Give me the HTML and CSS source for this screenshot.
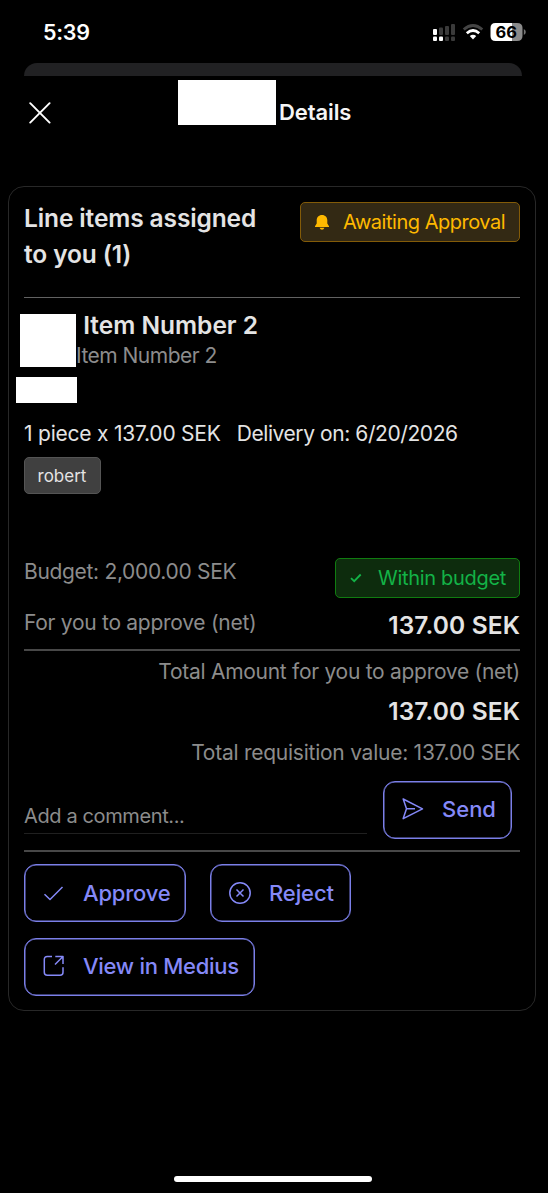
FILE: index.html
```html
<!DOCTYPE html>
<html lang="en">
<head>
<meta charset="utf-8">
<title>Details</title>
<link rel="stylesheet" href="styles.css">
</head>
<body>
<div class="screen">
  <div class="status">
    <span class="time">5:39</span>
    <svg class="status-icons" width="94" height="20" viewBox="0 0 94 20">
      <g fill="#fff"><rect x="1" y="6" width="4" height="6" rx="1"/><rect x="1" y="13.500" width="4" height="4.500" rx="1"/><rect x="7" y="13.500" width="4" height="4.500" rx="1"/></g>
      <g fill="#3a3a3a"><rect x="7" y="4.500" width="4" height="7.500" rx="1"/><rect x="13" y="3" width="4" height="9" rx="1"/><rect x="19" y="1" width="4" height="11" rx="1"/><rect x="13" y="13.500" width="4" height="4.500" rx="1"/><rect x="19" y="13.500" width="4" height="4.500" rx="1"/></g>
      <g fill="none" stroke-width="2.800"><path d="M31.700 6.500Q41-1.500 50.300 6.500" stroke="#444"/><path d="M34.800 10.300Q41 4.800 47.200 10.300" stroke="#fff"/></g>
      <path d="M37.800 13Q41 10.300 44.200 13L41 16.500Z" fill="#fff"/>
      <path d="M63.500 0h17v18H63.500q-5 0-5-5V5q0-5 5-5Z" fill="#fff"/><path d="M80.500 0h4.500q5.500 0 5.500 5v8q0 5-5.500 5h-4.500Z" fill="#8b8b8b"/><path d="M91.800 6q2 1 2 3t-2 3Z" fill="#777"/>
      <text class="battery-text" x="74.300" y="15" text-anchor="middle">66</text>
    </svg>
  </div>
  <div class="sheet-behind"></div>
  <header class="nav">
    <svg class="close" width="22" height="22" viewBox="0 0 22 22"><path d="M1.200 1.200 20.600 20.600M20.600 1.200 1.200 20.600"/></svg>
    <span class="mask mask-title"></span>
    <h1 class="nav-title">Details</h1>
  </header>
  <main class="card">
    <div class="card-head">
      <h2 class="heading">Line items assigned<br>to you (1)</h2>
      <div class="badge badge-wait">
        <svg width="14" height="15" viewBox="0 0 14 15"><path d="M7 0C3.700 0 1.700 2.300 1.700 5.300V8.500L0 11.300V12H14V11.300L12.300 8.500V5.300C12.300 2.300 10.300 0 7 0ZM4.600 12.700Q5.200 14.700 7 14.700T9.400 12.700Z" fill="#ffb900"/></svg>
        <span>Awaiting Approval</span>
      </div>
    </div>
    <section class="item">
      <div class="item-name">n Item Number 2</div>
      <div class="item-sub">Item Number 2</div>
      <span class="mask mask-name"></span>
      <span class="mask mask-code"></span>
    </section>
    <div class="facts"><span class="qty">1 piece x 137.00 SEK</span><span class="delivery">Delivery on: 6/20/2026</span></div>
    <div class="tag">robert</div>
    <div class="budget">
      <span class="budget-label">Budget: 2,000.00 SEK</span>
      <div class="badge badge-ok">
        <svg width="12" height="10" viewBox="0 0 12 10"><path d="M1 5.200 4.200 8.200 10.700 1.500" fill="none" stroke="#13b347" stroke-width="1.800"/></svg>
        <span>Within budget</span>
      </div>
    </div>
    <div class="net"><span class="net-label">For you to approve (net)</span><strong class="amount">137.00 SEK</strong></div>
    <div class="totals">
      <span class="total-label">Total Amount for you to approve (net)</span>
      <strong class="amount">137.00 SEK</strong>
      <span class="req">Total requisition value: 137.00 SEK</span>
    </div>
    <div class="comment">
      <div class="field"><span>Add a comment...</span></div>
      <button class="btn btn-send"><svg width="22" height="22" viewBox="0 0 22 22"><path d="M1.200 1 20.500 10.800 1.200 20.600 4.500 10.800ZM4.500 10.800H13"/></svg><span>Send</span></button>
    </div>
    <div class="actions">
      <button class="btn btn-approve"><svg width="22" height="22" viewBox="0 0 22 22"><path d="M1.500 12.300 7 17.500 19.500 5"/></svg><span>Approve</span></button>
      <button class="btn btn-reject"><svg width="22" height="22" viewBox="0 0 22 22"><circle cx="11" cy="11" r="10.200"/><path d="M7.500 7.500 14.500 14.500M14.500 7.500 7.500 14.500"/></svg><span>Reject</span></button>
      <button class="btn btn-view"><svg width="22" height="22" viewBox="0 0 22 22"><path d="M9 1.500H4.300Q1.300 1.500 1.300 4.500V17.300Q1.300 20.300 4.300 20.300H17Q20 20.300 20 17.300V12.300M12.300 1.500H20V9M20 1.500 12 9.500"/></svg><span>View in Medius</span></button>
    </div>
  </main>
  <div class="home"></div>
</div>
</body>
</html>
```
FILE: styles.css
```css
* { box-sizing: border-box; }
body { margin: 0; background: #000; }
.screen { width: 548px; height: 1193px; display: flex; flex-direction: column; overflow: hidden; background: #000; color: #e4e4e4; font: 400 21px/30px Inter, "Liberation Sans", sans-serif; white-space: nowrap; }
.status { height: 63px; padding: 18px 22px 0 43px; display: flex; justify-content: space-between; align-items: flex-start; }
.time { font-size: 21.500px; font-weight: 600; line-height: 28px; letter-spacing: -.3px; color: #fff; }
.status-icons { margin-top: 5px; }
.battery-text { font: 700 16.500px Inter, sans-serif; fill: #000; }
.sheet-behind { flex: none; height: 13px; margin: 0 26px 0 24px; border-radius: 13px 13px 0 0; background: #212123; }
.nav { height: 110px; padding: 4px 0 0 29px; display: flex; align-items: flex-start; }
.close { margin: 22px 127px 0 0; fill: none; stroke: #fff; stroke-width: 1.900; stroke-linecap: round; }
.mask { background: #fff; }
.mask-title { width: 98px; height: 45px; }
.nav-title { margin: 17px 0 0 3px; font-size: 22px; font-weight: 600; line-height: 30px; letter-spacing: -.1px; color: #f5f5f5; }
.card { width: 528px; height: 825px; margin-left: 8px; padding: 0 15px; border: 1px solid #282828; border-radius: 16px; }
.card-head { height: 111px; padding-top: 13px; display: flex; justify-content: space-between; align-items: flex-start; border-bottom: 1px solid #626262; }
.heading { margin: 0; font-size: 24.500px; font-weight: 600; line-height: 36px; letter-spacing: -.12px; }
.badge { height: 40px; display: flex; align-items: center; border: 1px solid; border-radius: 5px; font-size: 20px; }
.badge-wait { width: 220px; margin-top: 2px; padding-left: 14px; gap: 14px; color: #ffb900; background: #332914; border-color: #835b08; letter-spacing: -.48px; }
.badge-ok { width: 185px; padding-left: 14px; gap: 16px; color: #13b347; background: #0d2c0d; border-color: #107c10; letter-spacing: -.3px; }
.item { position: relative; height: 121px; padding-top: 12px; }
.item-name { padding-left: 38px; font-size: 24.500px; font-weight: 600; line-height: 30px; }
.item-sub { padding: 1px 0 0 52px; color: #8c8c8c; letter-spacing: -.52px; }
.mask-name { position: absolute; left: -4px; top: 16px; width: 56px; height: 53px; }
.mask-code { position: absolute; left: -8px; top: 79px; width: 61px; height: 26px; }
.facts { height: 38px; display: flex; gap: 16px; }
.qty { letter-spacing: -.22px; }
.delivery { letter-spacing: -.42px; }
.tag { width: 77px; height: 37px; padding-right: 1px; display: flex; align-items: center; justify-content: center; border: 1px solid #555; border-radius: 5px; background: #404040; font-size: 17px; }
.budget { height: 50px; margin-top: 64px; display: flex; justify-content: space-between; color: #8c8c8c; }
.budget-label { line-height: 27px; letter-spacing: -.32px; }
.net { height: 43px; display: flex; justify-content: space-between; color: #8c8c8c; border-bottom: 2px solid #484848; }
.net-label { line-height: 29px; letter-spacing: -.28px; }
.amount { font-size: 24.500px; font-weight: 600; line-height: 34px; letter-spacing: .12px; color: #e4e4e4; }
.totals { height: 130px; padding-top: 6px; display: flex; flex-direction: column; align-items: flex-end; color: #8c8c8c; }
.totals .amount { margin: 7px 0 10px; }
.total-label { letter-spacing: -.28px; }
.req { letter-spacing: -.25px; }
.comment { height: 71px; display: flex; justify-content: space-between; padding-right: 8px; border-bottom: 2px solid #484848; }
.field { width: 343px; height: 53px; padding-top: 20px; border-bottom: 1px solid #202020; color: #8c8c8c; font-size: 20px; letter-spacing: -.38px; }
.btn { height: 58px; padding: 0 0 2px 18px; display: flex; align-items: center; gap: 18px; border: 1px solid #7b7fe8; border-radius: 12px; box-shadow: inset 0 0 0 .5px #7b7fe8; background: transparent; color: #8589f8; font: 450 22px/30px Inter, sans-serif; }
.btn svg { flex: none; fill: none; stroke: #8589f8; stroke-width: 1.500; stroke-linejoin: round; }
.btn-send { width: 129px; }
.actions { padding-top: 12px; display: flex; flex-wrap: wrap; gap: 16px 24px; }
.btn-approve { width: 162px; padding-bottom: 0; letter-spacing: -.2px; }
.btn-reject { width: 141px; padding-bottom: 0; letter-spacing: -.1px; }
.btn-view { width: 231px; letter-spacing: -.28px; }
.home { width: 198px; height: 6px; margin: 165px 0 0 174px; border-radius: 3px; background: #fff; }
```
